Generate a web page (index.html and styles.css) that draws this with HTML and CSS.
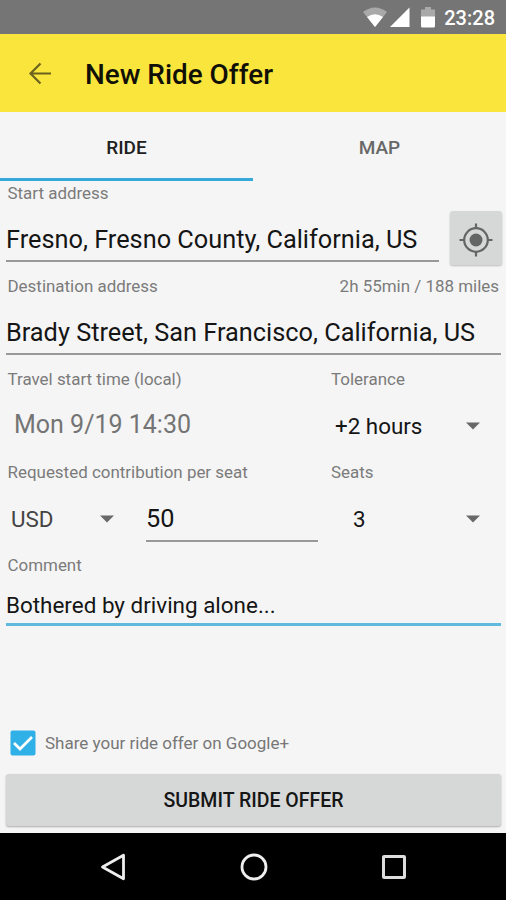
FILE: index.html
```html
<!DOCTYPE html>
<html lang="en">
<head>
<meta charset="utf-8">
<title>New Ride Offer</title>
<link rel="stylesheet" href="styles.css">
</head>
<body>
<div class="screen">
  <div class="status">
    <svg width="74" height="34" viewBox="0 0 74 34">
      <path d="M2 12Q14 3 26 12L14 27Z" fill="#a9a9a9"/>
      <path d="M6 17Q14 11.500 22 17L14 27Z" fill="#fff"/>
      <path d="M48.500 7.500V27H29Z" fill="#fff"/>
      <path d="M64 7h6v2.500h4V17H60V9.500h4Z" fill="#a9a9a9"/>
      <path d="M60 16.500h14V26q0 1.500-1.500 1.500h-11Q60 27.500 60 26Z" fill="#fff"/>
    </svg>
    <span class="clock">23:28</span>
  </div>
  <header class="toolbar">
    <svg class="back" width="24" height="24" viewBox="0 0 24 24"><path d="M23 11.500H2.500M12.500 1.500L2.500 11.500L12.500 21.500" fill="none" stroke="#6b621f" stroke-width="2.200"/></svg>
    <h1><span>New Ride Offer</span></h1>
  </header>
  <nav class="tabs">
    <div class="tab active"><span>RIDE</span></div>
    <div class="tab"><span>MAP</span></div>
  </nav>
  <main class="form">
    <section class="group">
      <div class="label"><span>Start address</span></div>
      <div class="row">
        <div class="input start"><span>Fresno, Fresno County, California, US</span></div>
        <button class="locate"><svg width="34" height="34" viewBox="0 0 34 34"><circle cx="17" cy="17" r="11.800" fill="none" stroke="#646565" stroke-width="2.200"/><circle cx="17" cy="17" r="6.500" fill="#646565"/><path d="M17 .5V6M17 28V33.500M.5 17H6M28 17H33.500" stroke="#646565" stroke-width="2.200"/></svg></button>
      </div>
    </section>
    <section class="group">
      <div class="label split"><span>Destination address</span><span class="trip">2h 55min / 188 miles</span></div>
      <div class="row"><div class="input"><span>Brady Street, San Francisco, California, US</span></div></div>
    </section>
    <section class="group cols">
      <div class="wide">
        <div class="label"><span>Travel start time (local)</span></div>
        <div class="row date"><span>Mon 9/19 14:30</span></div>
      </div>
      <div class="narrow">
        <div class="label"><span>Tolerance</span></div>
        <div class="row spinner"><span>+2 hours</span><svg class="arrow" width="14" height="8" viewBox="0 0 14 8"><path d="M0 .5H14L7 7.500Z"/></svg></div>
      </div>
    </section>
    <section class="group cols">
      <div class="wide">
        <div class="label"><span>Requested contribution per seat</span></div>
        <div class="row">
          <div class="spinner currency"><span>USD</span><svg class="arrow" width="14" height="8" viewBox="0 0 14 8"><path d="M0 .5H14L7 7.500Z"/></svg></div>
          <div class="input amount"><span>50</span></div>
        </div>
      </div>
      <div class="narrow">
        <div class="label"><span>Seats</span></div>
        <div class="row spinner seats"><span>3</span><svg class="arrow" width="14" height="8" viewBox="0 0 14 8"><path d="M0 .5H14L7 7.500Z"/></svg></div>
      </div>
    </section>
    <section class="comment">
      <div class="label"><span>Comment</span></div>
      <div class="input focus"><span>Bothered by driving alone...</span></div>
    </section>
    <div class="share">
      <svg width="26" height="26" viewBox="0 0 26 26"><rect x=".5" y=".5" width="25" height="25" rx="2" fill="#2fb0e6"/><path d="M4 13L10 19L22 7" fill="none" stroke="#fff" stroke-width="2.800"/></svg>
      <span>Share your ride offer on Google+</span>
    </div>
    <button class="submit"><span>SUBMIT RIDE OFFER</span></button>
  </main>
  <footer class="navbar">
    <svg width="28" height="30" viewBox="0 0 28 30"><path d="M24.500 3.200V26.800L3.500 15Z" fill="none" stroke="#eee" stroke-width="2.800" stroke-linejoin="round"/></svg>
    <svg width="28" height="30" viewBox="0 0 28 30"><circle cx="14" cy="15" r="12" fill="none" stroke="#eee" stroke-width="2.800"/></svg>
    <svg width="28" height="30" viewBox="0 0 28 30"><rect x="3.500" y="4.500" width="21" height="21" rx=".6" fill="none" stroke="#ddd" stroke-width="3"/></svg>
  </footer>
</div>
</body>
</html>
```

FILE: styles.css
```css
* { box-sizing: border-box; }
body { margin: 0; font-family: Roboto, "Liberation Sans", sans-serif; background: #f5f5f5; color: #151515; }
svg { display: block; flex: none; }
span { white-space: nowrap; }
button { border: 0; padding: 0; font: inherit; color: inherit; }
.screen { width: 506px; height: 900px; display: flex; flex-direction: column; overflow: hidden; }
.status { height: 34px; background: #757575; display: flex; align-items: center; justify-content: flex-end; padding-right: 11px; gap: 9px; color: #fff; }
.clock { font-size: 20px; font-weight: 500; line-height: 34px; padding-top: 2px; }
.toolbar { height: 78px; background: #fae53d; display: flex; align-items: center; padding: 1px 0 0 28px; }
h1 { margin: 0 0 0 33px; font-size: 27.900px; font-weight: 500; line-height: 32px; padding-top: 3px; color: #111006; }
.tabs { height: 69px; display: flex; flex: none; }
.tab { flex: 1; display: flex; align-items: center; justify-content: center; font-size: 19px; font-weight: 500; color: #686868; padding-top: 5px; border-bottom: 3px solid transparent; }
.tab.active { border-color: #36a9d8; color: #202020; }
.form { height: 652px; padding: 0 5px 0 6px; display: flex; flex-direction: column; flex: none; }
.group { height: 93px; flex: none; }
.label { height: 24px; line-height: 24px; padding: 0 2px 0 1.500px; font-size: 16.950px; color: #7b7b7b; }
.split { display: flex; justify-content: space-between; }
.row { height: 69px; display: flex; }
.input { height: 57px; line-height: 69px; border-bottom: 2px solid #999; font-size: 25.320px; flex: 1; }
.start { flex: 0 0 433px; }
.locate { width: 52px; height: 54px; margin: 6px -1px 0 11px; padding-top: 3px; background: #d6d8d8; border-radius: 3px; display: flex; align-items: center; justify-content: center; box-shadow: 0 1px 2px #bbb; }
.cols { display: flex; }
.wide { width: 323px; }
.narrow { width: 172px; }
.narrow .label { padding-left: 2px; }
.date { line-height: 67px; padding-left: 8px; font-size: 25px; color: #747474; }
.spinner { display: flex; align-items: center; justify-content: space-between; padding: 0 21px 0 6px; font-size: 22.400px; }
.arrow { fill: #686868; }
.currency { width: 140px; height: 69px; padding: 0 32px 0 5px; color: #444; }
.amount { flex: 0 0 172px; height: 58px; line-height: 69px; }
.seats { padding-left: 24px; }
.comment { height: 73px; }
.focus { height: 49px; line-height: 57px; font-size: 22.450px; border-bottom: 3px solid #62b9de; }
.share { margin-top: 103px; height: 27px; display: flex; align-items: center; gap: 9px; padding-left: 4px; font-size: 17px; color: #777; }
.submit { margin-top: 18px; height: 52px; flex: none; border-radius: 3px; background: #d6d8d8; box-shadow: 0 1px 2px #aaa; font-size: 19.500px; font-weight: 500; display: flex; align-items: center; justify-content: center; }
.navbar { height: 67px; flex: none; background: #000; display: flex; justify-content: center; align-items: center; gap: 112.500px; padding-left: 1px; }
```
